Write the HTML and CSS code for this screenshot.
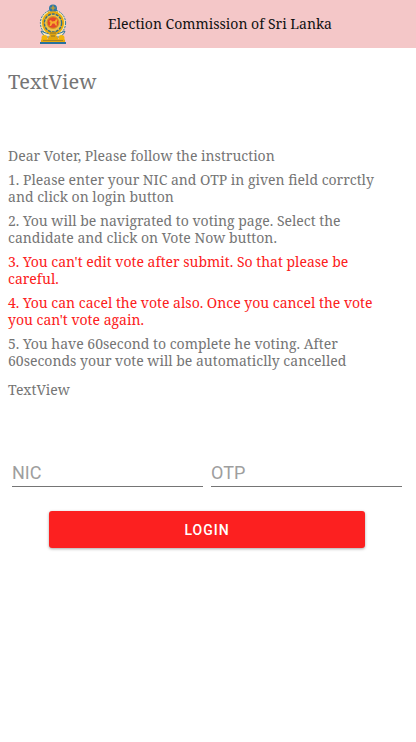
FILE: index.html
```html
<!DOCTYPE html>
<html lang="en">
<head>
<meta charset="utf-8">
<meta name="viewport" content="width=device-width, initial-scale=1">
<title>Election Commission of Sri Lanka</title>
<link rel="stylesheet" href="styles.css">
</head>
<body>
<header class="bar">
  <svg class="emblem" viewBox="0 0 28 40" role="img" aria-label="Emblem of Sri Lanka">
    <ellipse cx="14" cy="19" rx="12.6" ry="13" fill="#f3e3a4" stroke="#2d79a8" stroke-width="1" stroke-dasharray="2 1"/>
    <circle cx="14" cy="4.500" r="4" fill="#2e78a6"/>
    <path d="M11.500 4h5M14 1.500v5" stroke="#dba320" stroke-width="1.200"/>
    <path d="M9 8.500h10" stroke="#e0a61c" stroke-width="2"/>
    <ellipse cx="14" cy="19" rx="11" ry="11.500" fill="#e9ab0c"/>
    <ellipse cx="14" cy="19" rx="8.600" ry="9" fill="#efc34b" stroke="#2f6c8c" stroke-width="1.400" stroke-dasharray="3 1"/>
    <circle cx="14" cy="18.500" r="6.500" fill="#d58f22"/>
    <circle cx="14" cy="18.500" r="5.300" fill="#e4482a"/>
    <path d="M10 17l2-1 1 1.500 3-.5 1-2 1.500 1-1 2.500.5 3h-1.500l-1-2h-2l-1.500 2.500h-1.500l1-3.500z" fill="#f7ad2c"/>
    <path d="M2 27c1 3 3 5 6 6h12c3-1 5-3 6-6-4 2-7 3-12 3S6 29 2 27z" fill="#f4e6bd" stroke="#2f76a0" stroke-width="1"/>
    <path d="M8 28h12l-3 3 3 5H8l3-5z" fill="#e3a60d"/>
    <path d="M11 29h6M12 32h4" stroke="#866f31" stroke-width="1"/>
    <circle cx="5.500" cy="34" r="3" fill="#f2b40b"/>
    <circle cx="22.500" cy="34" r="3" fill="#f2b40b"/>
    <path d="M2 35.500h24v2.500H2z" fill="#e9a90b"/>
    <path d="M4 36.500h20" stroke="#a98222" stroke-width="1"/>
    <path d="M1 38h26v2H1z" fill="#28719d"/>
  </svg>
  <h1 class="bar-title">Election Commission of Sri Lanka</h1>
</header>
<main class="page">
  <h2 class="heading">TextView</h2>
  <section class="notes">
    <p>Dear Voter, Please follow the instruction</p>
    <p>1. Please enter your NIC and OTP in given field corrctly and click on login button</p>
    <p>2. You will be navigrated to voting page. Select the candidate and click on Vote Now button.</p>
    <p class="warning">3. You can't edit vote after submit. So that please be careful.</p>
    <p class="warning">4. You can cacel the vote also. Once you cancel the vote you can't vote again.</p>
    <p>5. You have 60second to complete he voting. After 60seconds your vote will be automaticlly cancelled</p>
  </section>
  <p class="status">TextView</p>
  <form class="login">
    <div class="fields">
      <input class="field" type="text" placeholder="NIC" aria-label="NIC">
      <input class="field" type="text" placeholder="OTP" aria-label="OTP">
    </div>
    <button class="submit" type="button">LOGIN</button>
  </form>
</main>
</body>
</html>
```
FILE: styles.css
```css
* {
  box-sizing: border-box;
}

body {
  margin: 0;
  background: #fff;
  color: #757575;
  font-family: "Noto Serif", "DejaVu Serif", serif;
  font-size: 14px;
  line-height: 17px;
}

h1,
h2,
p {
  margin: 0;
  font-weight: 400;
}

.bar {
  display: flex;
  align-items: center;
  gap: 41px;
  height: 48px;
  padding-left: 39px;
  background: #f4c7c8;
  color: #111;
}

.emblem {
  width: 28px;
  height: 40px;
}

.bar-title {
  font-size: 14px;
  line-height: 20px;
}

.page {
  padding: 20px 8px;
}

.heading {
  font-size: 20px;
  line-height: 28px;
}

.notes {
  display: grid;
  gap: 7px;
  margin-top: 51px;
  padding-right: 20px;
}

.warning {
  color: #fc2020;
}

.status {
  margin-top: 12px;
}

.login {
  margin-top: 60px;
}

.fields {
  display: grid;
  grid-template-columns: 1fr 1fr;
  gap: 8px;
  padding: 0 6px 0 4px;
}

.field {
  width: 100%;
  min-width: 0;
  height: 29px;
  padding: 0;
  border: 0;
  border-bottom: 1px solid #757575;
  border-radius: 0;
  background: transparent;
  color: #222;
  font-family: Roboto, sans-serif;
  font-size: 18px;
}

.field::placeholder {
  color: #9e9e9e;
  opacity: 1;
}

.submit {
  display: block;
  width: calc(100% - 84px);
  height: 37px;
  margin: 24px 0 0 41px;
  padding: 0;
  border: 0;
  border-radius: 3px;
  background: #fc2020;
  box-shadow: 0 1px 3px rgba(0, 0, 0, 0.35);
  color: #fff;
  font-family: Roboto, sans-serif;
  font-size: 14px;
  font-weight: 500;
  letter-spacing: 1px;
}
```
